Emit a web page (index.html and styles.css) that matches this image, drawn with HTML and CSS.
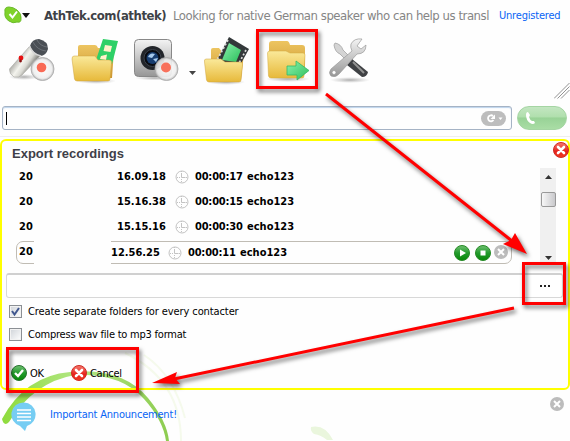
FILE: index.html
```html
<!DOCTYPE html>
<html lang="en">
<head>
  <meta charset="UTF-8">
  <title>Export recordings</title>
  <link rel="stylesheet" href="styles.css">
</head>
<body>

  <svg class="swirl" width="570" height="441" viewBox="0 0 570 441">
    <defs>
      <linearGradient id="arc" x1="0" y1="0" x2="1" y2="0">
        <stop offset="0" stop-color="#8edb3c"/><stop offset=".45" stop-color="#b2e684"/><stop offset="1" stop-color="#8dcc50"/>
      </linearGradient>
    </defs>
    <path d="M2 419Q25 376 70 372Q122 367 148 398Q167 421 169 441L166 441Q163 420 144 399Q121 373 75 375Q34 382 9 422Q4 427 2 419Z" fill="url(#arc)"/>
    <path d="M125 353Q181 380 181 441M144 355Q174 375 185 418" fill="none" stroke="#f5faec" stroke-width="2"/>
    <path d="M311 427Q325 424 333 440L327 440Q321 435 314 434Q310 431 311 427Z" fill="#eaf6dd"/>
  </svg>

  <!-- Contact header -->
  <div class="header">
    <svg class="status" width="22" height="18" viewBox="4 6 22 18">
      <path d="M5 12Q4 7 9 7Q13 7 17 10Q22 14 21 19Q21 23 17 22Q13 24 9 21Q4 18 5 12Z" fill="#7fd22a" stroke="#6cbb2c"/>
      <path d="M9.500 14l3 3.500 4.500-6" fill="none" stroke="#fff" stroke-width="2"/>
    </svg>
    <svg class="caret" width="8" height="5" viewBox="0 0 8 5"><path d="M0 0h8L4 5Z" fill="#111"/></svg>
    <span class="name">AthTek.com(athtek)</span>
    <span class="mood">Looking for native German speaker who can help us transl</span>
    <a class="license">Unregistered</a>
  </div>

  <!-- Toolbar -->
  <div class="toolbar">
    <svg width="48" height="52" viewBox="8 36 48 52">
      <defs>
        <linearGradient id="mic" gradientUnits="userSpaceOnUse" x1="17" y1="59" x2="30" y2="68">
          <stop offset="0" stop-color="#b5b5b0"/><stop offset=".4" stop-color="#f4f4ee"/><stop offset=".7" stop-color="#dadad4"/><stop offset="1" stop-color="#8e8e88"/>
        </linearGradient>
        <radialGradient id="disc"><stop offset="0" stop-color="#fff" stop-opacity=".95"/><stop offset=".8" stop-color="#eee" stop-opacity=".9"/><stop offset="1" stop-color="#bbb"/></radialGradient>
        <linearGradient id="fold" x1="0" y1="0" x2="0" y2="1"><stop offset="0" stop-color="#fae99a"/><stop offset="1" stop-color="#e7b93a"/></linearGradient>
        <linearGradient id="foldback" x1="0" y1="0" x2="0" y2="1"><stop offset="0" stop-color="#edc561"/><stop offset="1" stop-color="#cc9530"/></linearGradient>
        <linearGradient id="metal" x1="0" y1="0" x2="0" y2="1"><stop offset="0" stop-color="#f4f4f4"/><stop offset="1" stop-color="#969696"/></linearGradient>
        <linearGradient id="green" x1="0" y1="0" x2="1" y2="1"><stop offset="0" stop-color="#8cf2ad"/><stop offset="1" stop-color="#2bbf5c"/></linearGradient>
        <radialGradient id="shade"><stop offset="0" stop-color="#777" stop-opacity=".6"/><stop offset="1" stop-color="#999" stop-opacity="0"/></radialGradient>
      </defs>
      <ellipse cx="24" cy="77" rx="15" ry="3" fill="url(#shade)"/>
      <path d="M29 47L40 56L22 75Q19 78 14 77Q9 74 9.500 69Z" fill="url(#mic)" stroke="#a5a5a0" stroke-width=".6"/>
      <path d="M30 46Q32 39 39 39Q48 41 48 49Q46 56 40 56Q33 53 30 46Z" fill="#4a4f55"/>
      <path d="M29.500 46Q32 54 41 56" fill="none" stroke="#d5d5d5" stroke-width="1.600"/>
      <path d="M33 42Q37 50 46 51M37 40Q40 46 47 47" fill="none" stroke="#737980" stroke-width=".8"/>
      <circle cx="21" cy="58" r="2.400" fill="#e81111"/><circle cx="20.500" cy="61" r="1.400" fill="#8b1010"/>
      <circle cx="42.500" cy="69" r="11.500" fill="url(#disc)" stroke="#aaa" stroke-width=".8"/>
      <circle cx="41.500" cy="67.500" r="4.800" fill="#f96a55"/>
    </svg>

    <svg width="50" height="52" viewBox="70 36 50 52">
      <ellipse cx="96" cy="81" rx="20" ry="3" fill="url(#shade)"/>
      <path d="M78 57V47Q78 45 80 45H95Q97 45 98 48H112Q114 48 114 50L112 78H78Z" fill="url(#foldback)"/>
      <path d="M103 39L118 41L112 64L96 60Z" fill="#2ed067"/>
      <path d="M105 45l7 1-1.500 6-7-1ZM101 56l6-1.500-1 5.500-6-1Z" fill="#fff1cb"/>
      <path d="M74 56H95L98 60H109Q112 60 111.500 63L110 79Q110 81 108 81H77Q75 81 74.500 79L72 59Q72 56 74 56Z" fill="url(#fold)" stroke="#cfa33f" stroke-width=".5"/>
    </svg>

    <svg width="48" height="52" viewBox="133 36 48 52">
      <ellipse cx="155" cy="78" rx="20" ry="2.500" fill="url(#shade)"/>
      <rect x="134.500" y="39.500" width="37" height="37" rx="4" fill="url(#metal)" stroke="#888"/>
      <circle cx="152.500" cy="58" r="12" fill="#22252a"/>
      <circle cx="152.500" cy="58" r="8.500" fill="#0a0c12" stroke="#3c424b"/>
      <circle cx="152.500" cy="58" r="6" fill="#173d70"/>
      <path d="M148 57Q150 52 155 54L152 58ZM153 59l5-1-2 4Z" fill="#a7caec"/>
      <circle cx="166.500" cy="69" r="11.500" fill="url(#disc)" stroke="#aaa" stroke-width=".8"/>
      <circle cx="166" cy="67.500" r="5" fill="#f8715c"/>
    </svg>

    <svg class="more" width="7" height="4" viewBox="0 0 7 4"><path d="M0 0h7L3.500 4Z" fill="#444"/></svg>

    <svg width="48" height="52" viewBox="203 36 48 52">
      <ellipse cx="226" cy="82" rx="19" ry="3" fill="url(#shade)"/>
      <path d="M211 61V50Q211 48 213 48H219L223 53H244L241 80H211Z" fill="url(#foldback)"/>
      <path d="M229 37L249 49L239 67L216 62Z" fill="#33383a"/>
      <path d="M229 43L241 50L236 62L222 60Z" fill="url(#green)"/>
      <path d="M228 40L217 60M246 50L238 65" stroke="#ddd" stroke-width="1.700" stroke-dasharray="2 2"/>
      <path d="M206 59H221L225 62H240Q243 62 242.500 65L241 80Q241 82 239 82H209Q207 82 206.500 80L204.500 62Q204 59 206 59Z" fill="url(#fold)" stroke="#cfa33f" stroke-width=".5"/>
    </svg>

    <svg width="46" height="52" viewBox="265 36 46 52">
      <ellipse cx="288" cy="79" rx="22" ry="3" fill="url(#shade)"/>
      <path d="M269 54V44Q269 41 272 41H287Q289 41 290 45H302Q305 45 305 48V74H269Z" fill="url(#foldback)"/>
      <path d="M270 51H286L290 53H303Q305 53 305 55L304 76Q304 78 302 78H271Q269 78 268.500 76L267.500 53Q267.500 51 270 51Z" fill="url(#fold)" stroke="#d3a83f" stroke-width=".5"/>
      <path d="M287 66H296V61L309 70.500L297 80V75H287Z" fill="url(#green)" stroke="#35b967" stroke-width=".8"/>
    </svg>

    <svg width="42" height="52" viewBox="329 36 42 52">
      <ellipse cx="350" cy="80" rx="20" ry="3" fill="url(#shade)"/>
      <path d="M335 43Q341 44 343 50L353 60L350 64L340 54Q335 52 334 45Z" fill="#d4d4d4" stroke="#a2a2a2" stroke-width=".8"/>
      <path d="M352 59L368 72Q367 77 362 77L347 65Z" fill="#3f4144"/>
      <path d="M353 62L364 73" stroke="#929292" stroke-width="2"/>
      <path d="M362 39Q354 38 351 44Q350 47 352 51L331 69Q328 73 331 76Q336 78 339 74L357 54Q366 54 366 45L361 49L357 46Z" fill="url(#metal)" stroke="#999" stroke-width=".7"/>
      <circle cx="334" cy="72.500" r="2" fill="#fff" stroke="#999" stroke-width=".7"/>
    </svg>

    <svg class="grip" width="16" height="16" viewBox="0 0 16 16"><path d="M0 15.500L15.500 0M3.500 15.500L15.500 3.500M7 15.500L15.500 7" stroke="#777" fill="none" stroke-width=".8"/></svg>
  </div>

  <!-- Dial bar -->
  <div class="dial">
    <div class="dial-input">
      <span class="cursor"></span>
      <span class="redial">
        <svg width="25" height="15" viewBox="0 0 25 15">
          <path d="M12 5A3 3 0 1 0 12.500 9" fill="none" stroke="#fff" stroke-width="1.800"/>
          <path d="M14 3.500v4.500H9.500Z" fill="#fff"/><path d="M17.500 6.500h4l-2 2.500Z" fill="#fff"/>
        </svg>
      </span>
    </div>
    <div class="call">
      <svg width="10" height="14" viewBox="0 0 10 14"><path d="M2 1L4 4L3 6Q4 9 6 10L8 10L9 12Q7 14 4 12Q0 9 0 4Q0 1 2 1Z" fill="#fff"/></svg>
    </div>
  </div>

  <!-- Export panel -->
  <div class="panel">
    <div class="title-row">
      <h1>Export recordings</h1>
      <svg class="close" width="16" height="16" viewBox="0 0 16 16"><use href="#cross"/></svg>
    </div>

    <div class="list">
      <div class="rows">
        <div class="row"><span class="date">20</span><span class="time">16.09.18</span><svg class="clock" width="14" height="14"><use href="#clock"/></svg><span class="length">00:00:17</span><span class="who">echo123</span></div>
        <div class="row"><span class="date">20</span><span class="time">15.16.38</span><svg class="clock" width="14" height="14"><use href="#clock"/></svg><span class="length">00:00:15</span><span class="who">echo123</span></div>
        <div class="row"><span class="date">20</span><span class="time">15.15.16</span><svg class="clock" width="14" height="14"><use href="#clock"/></svg><span class="length">00:00:30</span><span class="who">echo123</span></div>
        <div class="row selected">
          <span class="date">20</span><span class="time">12.56.25</span><svg class="clock" width="14" height="14"><use href="#clock"/></svg><span class="length">00:00:11</span><span class="who">echo123</span>
          <span class="actions">
            <svg width="16" height="16" viewBox="0 0 16 16"><circle cx="8" cy="8" r="7.500" fill="url(#ball)" stroke="#278a27"/><path d="M6 4.500L12 8L6 11.500Z" fill="#fff"/></svg>
            <svg width="16" height="16" viewBox="0 0 16 16"><circle cx="8" cy="8" r="7.500" fill="url(#ball)" stroke="#278a27"/><rect x="5.500" y="5.500" width="5" height="5" fill="#fff"/></svg>
            <svg class="remove" width="14" height="14"><use href="#graycross"/></svg>
          </span>
        </div>
      </div>
      <div class="scrollbar">
        <svg width="7" height="4" viewBox="0 0 7 4"><path d="M0 4h7L3.500 0Z" fill="#333"/></svg>
        <div class="thumb"></div>
        <svg class="down" width="7" height="4" viewBox="0 0 7 4"><path d="M0 0h7L3.500 4Z" fill="#333"/></svg>
      </div>
    </div>

    <div class="path"><span class="browse"><i></i><i></i><i></i></span></div>

    <div class="option">
      <span class="box"><svg width="11" height="11" viewBox="0 0 11 11"><path d="M2 5L4.500 8.500L9 2" fill="none" stroke="#41588f" stroke-width="2"/></svg></span>
      <span class="label-one">Create separate folders for every contacter</span>
    </div>
    <div class="option">
      <span class="box"></span>
      <span class="label-two">Compress wav file to mp3 format</span>
    </div>

    <div class="buttons">
      <span class="ok"><svg width="16" height="16" viewBox="0 0 16 16"><circle cx="8" cy="8" r="7.500" fill="url(#ball)" stroke="#27722f"/><path d="M4 8l3 3 5-6" fill="none" stroke="#fff" stroke-width="2.400"/></svg><span>OK</span></span>
      <span class="cancel"><svg width="16" height="16" viewBox="0 0 16 16"><use href="#cross"/></svg><span>Cancel</span></span>
    </div>
  </div>

  <!-- Announcement -->
  <div class="news">
    <svg width="26" height="30" viewBox="11 402 26 30">
      <path d="M24 402.500A12 12 0 0 1 27 426L25 431L20 426A12 12 0 0 1 24 402.500Z" fill="#76cdf3"/>
      <path d="M17 410h14M17 413.500h14M17 417h14M17 420.500h14" stroke="#fff" stroke-width="1.700"/>
    </svg>
    <a>Important Announcement!</a>
    <svg class="dismiss" width="14" height="14"><use href="#graycross"/></svg>
  </div>

  <!-- Shared icons -->
  <svg class="shared" width="0" height="0">
    <defs>
      <linearGradient id="ball" x1="0" y1="0" x2="0" y2="1"><stop offset="0" stop-color="#71c171"/><stop offset=".5" stop-color="#239b2d"/><stop offset="1" stop-color="#068706"/></linearGradient>
      <linearGradient id="redball" x1="0" y1="0" x2="0" y2="1"><stop offset="0" stop-color="#f47b70"/><stop offset=".6" stop-color="#e6231c"/><stop offset="1" stop-color="#f03c20"/></linearGradient>
      <g id="cross"><circle cx="8" cy="8" r="7.500" fill="url(#redball)" stroke="#cf2b24"/><path d="M5 5l6 6M11 5l-6 6" stroke="#fff" stroke-width="2.600" stroke-linecap="round"/></g>
      <g id="graycross"><circle cx="7" cy="7" r="7" fill="#bcbcbc"/><path d="M4 4l6 6M10 4l-6 6" stroke="#fff" stroke-width="2"/></g>
      <g id="clock" fill="none" stroke="#c3c3c3"><circle cx="7" cy="7" r="6"/><path d="M6.500 3v4.500h4"/><path d="M6.500 9v4M2 7.500h4M6.500 1v1M11 7.500h1" stroke-dasharray="1 1"/></g>
    </defs>
  </svg>

  <!-- Step markers -->
  <svg class="markers" width="570" height="441" viewBox="0 0 570 441">
    <g fill="none" stroke="#f00" stroke-width="3">
      <rect x="257.500" y="30.500" width="59" height="57"/>
      <rect x="523.500" y="263.500" width="41" height="40"/>
      <rect x="7.500" y="348.500" width="130" height="43"/>
      <path d="M326 94L512 241M514 308L174 379"/>
    </g>
    <path d="M527 254L515 233L511 240L503 244ZM152 383L177 372L175 378L180 384Z" fill="#f00"/>
  </svg>

</body>
</html>
```
FILE: styles.css
```css
* {
  box-sizing: border-box;
}

body {
  margin: 0;
  width: 570px;
  height: 441px;
  overflow: hidden;
  background-color: #fefefe;
  font-family: "DejaVu Sans Condensed", "DejaVu Sans", sans-serif;
  font-stretch: condensed;
  font-size: 11px;
  color: #000;
  white-space: nowrap;
}

svg {
  display: block;
  flex: none;
}

.swirl,
.markers {
  position: absolute;
  left: 0;
  top: 0;
  pointer-events: none;
}

.swirl {
  z-index: -1;
}

.markers {
  filter: drop-shadow(2px 3px 2px rgba(0, 0, 0, 0.55));
}

.shared {
  position: absolute;
}

/* Header */
.header {
  display: flex;
  align-items: center;
  height: 30px;
  padding-left: 4px;
}

.caret {
  margin-left: -4px;
}

.name {
  width: 129px;
  margin-left: 14px;
  font-size: 13px;
  font-weight: bold;
  letter-spacing: -0.45px;
  color: #3e4247;
}

.mood {
  width: 326px;
  font-size: 13px;
  letter-spacing: -0.46px;
  color: #858585;
}

.license,
.news a {
  letter-spacing: -0.2px;
  color: #0864f5;
}

/* Toolbar */
.toolbar {
  display: flex;
  height: 76px;
  padding: 6px 0 0 8px;
}

.toolbar svg + svg {
  margin-left: 14px;
}

.toolbar svg.more {
  margin: 35px 0 0 8px;
}

.toolbar svg.more + svg {
  margin-left: 7px;
}

.toolbar svg:nth-of-type(3) {
  margin-left: 13px;
}

.toolbar svg:nth-of-type(7) {
  margin-left: 18px;
}

.toolbar svg.grip {
  margin: 47px 0 0 auto;
}

/* Dial bar */
.dial {
  display: flex;
  gap: 5px;
  height: 31px;
  padding-left: 2px;
  border-bottom: 1px solid #eee;
}

.dial-input {
  display: flex;
  align-items: center;
  width: 510px;
  height: 24px;
  padding: 0 5px 0 3px;
  border: 1px solid #a5b3c5;
  border-radius: 3px;
  box-shadow: inset 0 1px 1px #bdd4ed;
}

.cursor {
  width: 1px;
  height: 13px;
  background-color: #000;
}

.redial {
  height: 15px;
  margin-left: auto;
  border-radius: 8px;
  background-color: #bdbdbd;
}

.call {
  display: flex;
  align-items: center;
  width: 50px;
  height: 24px;
  padding-left: 8px;
  border: 1px solid #a5d5a3;
  border-radius: 12px;
  background: linear-gradient(#c3e6c1, #b0dfad 45%, #98d296 50%, #a9dda5);
}

/* Export panel */
.panel {
  height: 251px;
  margin-top: 2px;
  border: 2px solid #ff0;
  border-radius: 6px;
}

.title-row {
  display: flex;
  height: 23px;
  padding: 1px 0 0 10px;
}

h1 {
  margin: 4px 0 0;
  font-family: "Liberation Sans", Arial, sans-serif;
  font-size: 13px;
  line-height: 16px;
  color: #3f3f48;
}

.close {
  margin: 0 -1px 0 auto;
}

.list {
  display: flex;
  height: 100px;
}

.rows {
  width: 496px;
  margin-left: 14px;
}

.row {
  display: flex;
  align-items: center;
  height: 25px;
  padding-left: 3px;
  font-weight: bold;
}

.date {
  width: 98px;
}

.time {
  width: 58px;
}

.length {
  width: 50px;
  margin-left: 6px;
  letter-spacing: -0.2px;
}

.row .who {
  margin-left: 2px;
}

.row.selected {
  height: 23px;
  margin-top: 2px;
  padding-left: 2px;
  border: 1px solid #c0bcb4;
  border-radius: 7px;
}

.selected .date {
  width: 92px;
  height: 23px;
  line-height: 22px;
  /* hides the rest of the date together with the frame behind it */
  background: linear-gradient(#fefefe, #fefefe) 15px 0 / 77px 23px no-repeat;
}

.selected .time {
  width: 57px;
}

.actions {
  display: flex;
  gap: 5px;
  margin-left: auto;
  padding: 1px 3px 0 0;
}

.remove {
  margin-left: -2px;
}

.scrollbar {
  display: flex;
  flex-direction: column;
  align-items: center;
  width: 16px;
  height: 94px;
  margin: 4px 0 0 28px;
  padding: 7px 0 2px;
  background-color: #f0f0f0;
}

.thumb {
  width: 15px;
  height: 15px;
  margin-top: 13px;
  border: 1px solid #999;
  border-radius: 2px;
  background: linear-gradient(to right, #f7f7f7, #c9c9cc);
}

.down {
  margin-top: auto;
}

.path {
  display: flex;
  align-items: center;
  justify-content: flex-end;
  width: 557px;
  height: 25px;
  margin: 9px 0 0 4px;
  padding-right: 12px;
  border: 1px solid #d8d8d8;
  border-top: 2px solid #d0d0d0;
  border-radius: 3px;
  background-color: #fff;
}

.browse {
  display: flex;
  gap: 2px;
}

.browse i {
  width: 2px;
  height: 2px;
  background-color: #222;
}

.option {
  display: flex;
  align-items: center;
  gap: 6px;
  height: 23px;
  padding-left: 7px;
}

.path + .option {
  margin-top: 2px;
}

.label-one {
  letter-spacing: -0.1px;
}

.label-two {
  letter-spacing: -0.22px;
}

.box {
  width: 13px;
  height: 13px;
  border: 1px solid #8b8f94;
  background: linear-gradient(135deg, #cfd3d8, #fff);
  box-shadow: inset 0 0 0 1px #f2f2f2;
}

.buttons {
  display: flex;
  height: 30px;
  margin-top: 11px;
  padding-left: 9px;
}

.ok,
.cancel {
  display: flex;
  align-items: center;
  gap: 3px;
  height: 32px;
  letter-spacing: -0.3px;
}

.ok {
  width: 60px;
}

/* Announcement */
.news {
  display: flex;
  height: 51px;
  padding: 12px 6px 0 11px;
}

.news a {
  margin: 6px 0 0 13px;
}

.dismiss {
  margin: -5px 0 0 auto;
}
```
